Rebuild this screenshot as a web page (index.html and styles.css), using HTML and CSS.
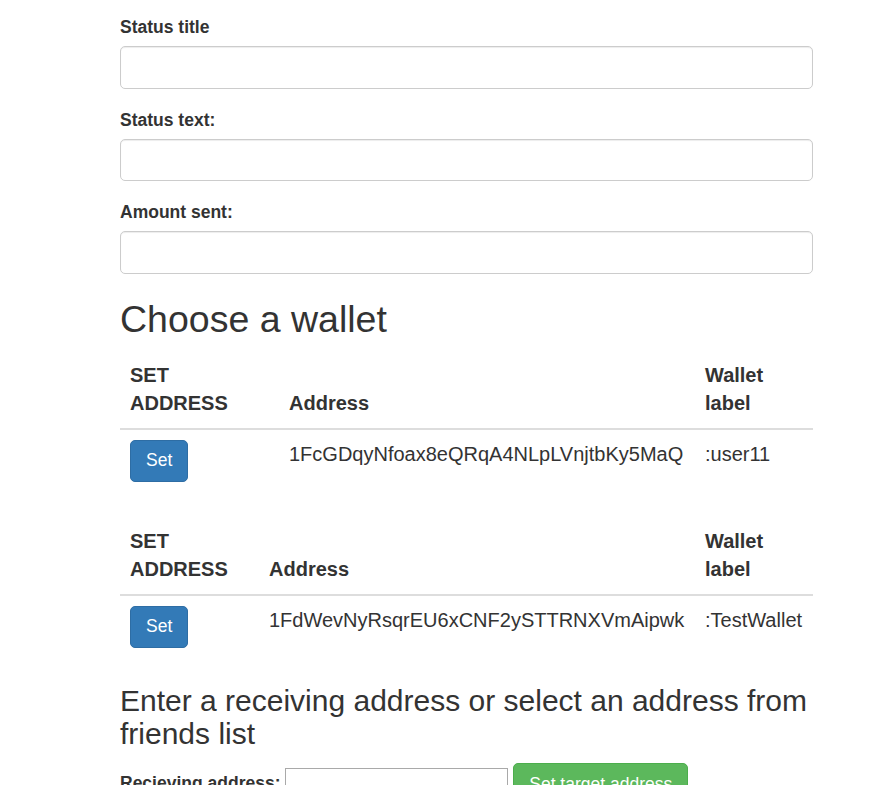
FILE: index.html
```html
<!DOCTYPE html>
<html lang="en">
<head>
<meta charset="utf-8">
<title>Send payment</title>
<link rel="stylesheet" href="styles.css">
</head>
<body>
<div class="container">
  <form class="status-form">
    <div class="form-group">
      <label for="status-title">Status title</label>
      <input id="status-title" type="text" class="form-control">
    </div>
    <div class="form-group">
      <label for="status-text">Status text:</label>
      <input id="status-text" type="text" class="form-control">
    </div>
    <div class="form-group">
      <label for="amount">Amount sent:</label>
      <input id="amount" type="text" class="form-control">
    </div>
  </form>

  <h2>Choose a wallet</h2>

  <table class="table wallet-table wallet-table--first">
    <thead>
      <tr>
        <th class="col-set">SET ADDRESS</th>
        <th class="col-addr">Address</th>
        <th class="col-label">Wallet label</th>
      </tr>
    </thead>
    <tbody>
      <tr>
        <td><button type="button" class="btn btn-primary">Set</button></td>
        <td>1FcGDqyNfoax8eQRqA4NLpLVnjtbKy5MaQ</td>
        <td>:user11</td>
      </tr>
    </tbody>
  </table>

  <table class="table wallet-table wallet-table--second">
    <thead>
      <tr>
        <th class="col-set">SET ADDRESS</th>
        <th class="col-addr">Address</th>
        <th class="col-label">Wallet label</th>
      </tr>
    </thead>
    <tbody>
      <tr>
        <td><button type="button" class="btn btn-primary">Set</button></td>
        <td>1FdWevNyRsqrEU6xCNF2ySTTRNXVmAipwk</td>
        <td>:TestWallet</td>
      </tr>
    </tbody>
  </table>

  <h3>Enter a receiving address or select an address from friends list</h3>

  <div class="target-row">
    <label for="receiving">Recieving address:</label>
    <input id="receiving" type="text" class="plain-input">
    <button type="button" class="btn btn-success">Set target address</button>
  </div>
</div>
</body>
</html>
```

FILE: styles.css
```css
html, body {
  margin: 0;
  padding: 0;
  background: #fff;
}

body {
  font-family: "Liberation Sans", Arial, Helvetica, sans-serif;
  font-size: 17.5px;
  line-height: 25px;
  color: #333;
  overflow: hidden;
}

.container {
  width: 693px;
  margin-left: 120px;
  padding-top: 15px;
}

.status-form {
  margin: 0;
}

.form-group {
  margin-bottom: 18.75px;
}

label {
  display: inline-block;
  max-width: 100%;
  margin-bottom: 6.25px;
  font-weight: bold;
}

.form-control {
  display: block;
  box-sizing: border-box;
  width: 100%;
  height: 42.5px;
  margin: 0;
  padding: 7.5px 15px;
  font: inherit;
  color: #555;
  background: #fff;
  border: 1px solid #ccc;
  border-radius: 5px;
  box-shadow: inset 0 1px 1px rgba(0, 0, 0, 0.075);
}

h2, h3 {
  font-family: inherit;
  font-weight: 500;
  line-height: 1.1;
  color: #333;
}

h2 {
  font-size: 37.5px;
  margin: 25px 0 10.5px;
}

h3 {
  font-size: 30px;
  margin: 25px 0 13.5px;
}

.table {
  width: 100%;
  max-width: 100%;
  margin-bottom: 25px;
  border-collapse: collapse;
  border-spacing: 0;
  table-layout: fixed;
  font-size: 20px;
  line-height: 28.57px;
}

.wallet-table--second {
  margin-bottom: 26px;
}

.table th {
  text-align: left;
  font-weight: bold;
  vertical-align: bottom;
  padding: 10px;
  border-bottom: 2px solid #ddd;
}

.table td {
  vertical-align: top;
  padding: 10px;
  border-top: 1px solid #ddd;
}

.wallet-table--first .col-set { width: 159px; }
.wallet-table--first .col-addr { width: 416px; }
.wallet-table--first .col-label { width: 118px; }

.wallet-table--second .col-set { width: 139px; }
.wallet-table--second .col-addr { width: 436px; }
.wallet-table--second .col-label { width: 118px; }

.table th, .table td {
  box-sizing: border-box;
}

.btn {
  display: inline-block;
  box-sizing: border-box;
  margin: 0;
  padding: 7.5px 15px;
  font-family: inherit;
  font-size: 17.5px;
  font-weight: normal;
  line-height: 25px;
  text-align: center;
  white-space: nowrap;
  vertical-align: middle;
  border: 1.25px solid transparent;
  border-radius: 5px;
  cursor: pointer;
  color: #fff;
}

.btn-primary {
  background-color: #337ab7;
  border-color: #2e6da4;
}

.btn-success {
  background-color: #5cb85c;
  border-color: #4cae4c;
}

.target-row label {
  margin-bottom: 0;
}

.plain-input {
  box-sizing: border-box;
  width: 223px;
  height: 31px;
  margin: 0;
  padding: 1px 2px;
  font: inherit;
  line-height: 25px;
  border: 1px solid #a9a9a9;
  background: #fff;
}
```
